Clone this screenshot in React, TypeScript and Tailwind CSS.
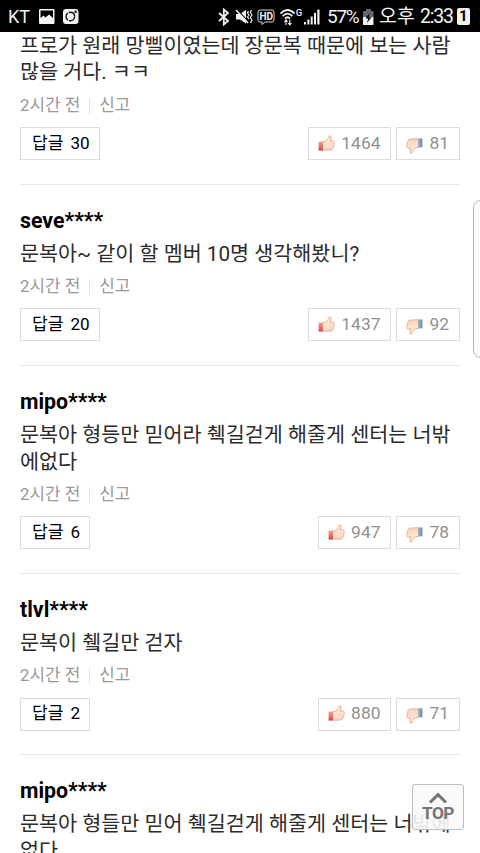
import type { ReactNode } from "react";

type Comment = {
  user?: string;
  lines: string[];
  replies?: number;
  likes?: number;
  dislikes?: number;
};

const comments: Comment[] = [
  { lines: ["프로가 원래 망삘이였는데 장문복 때문에 보는 사람", "많을 거다. ㅋㅋ"], replies: 30, likes: 1464, dislikes: 81 },
  { user: "seve****", lines: ["문복아~ 같이 할 멤버 10명 생각해봤니?"], replies: 20, likes: 1437, dislikes: 92 },
  { user: "mipo****", lines: ["문복아 형등만 믿어라 췍길걷게 해줄게 센터는 너밖", "에없다"], replies: 6, likes: 947, dislikes: 78 },
  { user: "tlvl****", lines: ["문복이 췤길만 걷자"], replies: 2, likes: 880, dislikes: 71 },
  { user: "mipo****", lines: ["문복아 형들만 믿어 췍길걷게 해줄게 센터는 너밖에", "없다"] },
];

const HAND =
  "M4.5 6.8 L7.5 6.2 C9.8 4.8 10.8 2.8 11.2 1 C12.6 0.2 13.4 1.6 13 3.2 L12.2 6 L14.8 5.9 C16.2 6 16.5 7.2 15.9 8.1 C16.6 8.9 16.3 10 15.6 10.5 C16 11.5 15.6 12.5 14.8 12.8 C14.9 14.1 14.1 14.8 13 14.9 L7.5 15.2 L4.5 15 Z";

function Thumb({ down = false }: { down?: boolean }) {
  const id = down ? "cuff-down" : "cuff-up";
  return (
    <svg width="17" height="17" viewBox="0 0 17 17" className={down ? "rotate-180" : ""}>
      <defs>
        <linearGradient id={id} x1="0" y1="0" x2={down ? "1" : "0"} y2={down ? "0" : "1"}>
          <stop offset="0" stopColor={down ? "#7186a8" : "#eda694"} />
          <stop offset="1" stopColor={down ? "#aab4c4" : "#d64545"} />
        </linearGradient>
        <linearGradient id={`${id}-skin`} x1="0" y1="0" x2="0" y2="1">
          <stop offset="0" stopColor="#fdeee2" />
          <stop offset="1" stopColor="#f8d5c0" />
        </linearGradient>
      </defs>
      <path d={HAND} fill={`url(#${id}-skin)`} stroke="#e8a883" strokeWidth="0.9" strokeLinejoin="round" />
      <rect x="0.6" y="6.6" width="4.4" height="9" fill={`url(#${id})`} />
    </svg>
  );
}

function VoteBox({ count, down = false }: { count: number; down?: boolean }) {
  return (
    <div className="flex h-[33px] items-center border border-[#dcdcdc] pr-[10px] pl-[9px]">
      <div className={down ? "mt-[3px]" : "-mt-px"}>
        <Thumb down={down} />
      </div>
      <span className="ml-[6px] text-[17.4px] leading-none text-[#909090]">{count}</span>
    </div>
  );
}

function CommentItem({ comment }: { comment: Comment }) {
  return (
    <li className="border-b border-[#e8e8e8]">
      {comment.user && (
        <p className="mb-[6px] pt-[22px] text-[21.3px] leading-[27px] font-bold text-black">{comment.user}</p>
      )}
      {comment.lines.map((line) => (
        <p key={line} className="relative top-[0.7px] text-[20.7px] leading-[26.67px] whitespace-nowrap text-[#2b2b2b]">
          {line}
        </p>
      ))}
      {comment.replies !== undefined && (
        <>
          <div className="mt-[9px] flex h-5 items-center text-[16.9px] leading-5 text-[#999]">
            <span className="mt-px">2시간 전</span>
            <span className="mx-[9px] mt-[3px] h-4 w-px bg-[#e2e2e2]" />
            <span className="mt-px">신고</span>
          </div>
          <div className="mt-[12.9px] mb-[23.7px] flex justify-between">
            <div className="flex h-[33px] items-center gap-[7px] border border-[#dcdcdc] pr-[9px] pl-[11px] text-[17.1px] leading-none text-black">
              <span className="-mt-px">답글</span>
              <span className="-mt-px">{comment.replies}</span>
            </div>
            <div className="flex gap-[5px]">
              <VoteBox count={comment.likes ?? 0} />
              <VoteBox count={comment.dislikes ?? 0} down />
            </div>
          </div>
        </>
      )}
    </li>
  );
}

function Icon({ w, className = "", children }: { w: number; className?: string; children: ReactNode }) {
  return (
    <svg width={w} height="18" viewBox={`0 0 ${w} 18`} fill="none" className={`shrink-0 ${className}`}>
      {children}
    </svg>
  );
}

function StatusBar() {
  return (
    <header className="relative z-10 flex h-8 items-center bg-black pt-[1px] pl-[8px] text-[#f2f2f2]">
      <span className="w-[31px] text-[18px] leading-none">KT</span>
      <Icon w={16}>
        <path fillRule="evenodd" fill="#f2f2f2" d="M1 1H14.5Q15.5 1 15.5 2V15Q15.5 16 14.5 16H1Q0 16 0 15V2Q0 1 1 1ZM1.5 2.5V10L4.5 7.5L6.5 9.5L10 6.5L14 10V2.5Z" />
      </Icon>
      <Icon w={16} className="ml-2">
        <rect y="1" width="15.5" height="15" rx="3" fill="#f2f2f2" />
        <circle cx="7.3" cy="8.5" r="4.3" stroke="#111" strokeWidth="1.4" strokeDasharray="8 1" />
        <circle cx="12.6" cy="3.8" r="1.4" fill="#333" />
      </Icon>
      <Icon w={12} className="ml-[139px]">
        <path d="M1 5L10 13L5.8 16.5V1.5L10 5L1 13" stroke="#f2f2f2" strokeWidth="1.8" />
      </Icon>
      <Icon w={18} className="ml-[5px]">
        <path d="M1 6H5L11 1.8V15.5L5 11.5H1Z" fill="#f2f2f2" />
        <path d="M2 1.5L13 13.5" stroke="#000" strokeWidth="1.2" />
        <path d="M1 2L13 15" stroke="#f2f2f2" strokeWidth="1.5" />
        <path d="M13.5 3L12.5 5L14 7L12.5 9L14 11M16.5 2L15.3 4.5L17 7L15.3 9.5L17 12L15.5 15" stroke="#f2f2f2" strokeWidth="1.2" />
      </Icon>
      <Icon w={19} className="ml-[4px]">
        <path d="M3 2H15Q17 2 17 4V12Q17 14 15 14H8L5 16.5V14H3Q1 14 1 12V4Q1 2 3 2Z" stroke="#d5d5d5" strokeWidth="1" />
        <text x="2.4" y="11.7" fontSize="10" fontWeight="700" fill="#f2f2f2" fontFamily="Roboto">HD</text>
      </Icon>
      <Icon w={23} className="ml-[4px]">
        <path d="M0.5 5.5Q7.5 -1.5 14.5 5.5M2.7 8.2Q7.5 3 12.3 8.2M5 10.5Q7.5 8 10 10.5" stroke="#f2f2f2" strokeWidth="1.8" />
        <path d="M6 17V12M4.3 14L6 12L7.5 14M9.8 11.5V16.5M8.2 15L9.8 17L11.5 15" stroke="#f2f2f2" strokeWidth="1.1" />
        <text x="15.7" y="8" fontSize="9.5" fontWeight="500" fill="#f2f2f2" fontFamily="Roboto">G</text>
      </Icon>
      <Icon w={16} className="ml-[1px]">
        <path d="M0 14H2V16.5H0ZM3.4 11.5H5.4V16.5H3.4ZM6.7 8.5H8.7V16.5H6.7ZM10 5H12V16.5H10ZM13.3 1.5H15.5V16.5H13.3Z" fill="#f2f2f2" />
      </Icon>
      <span className="ml-[7px] w-[36px] text-[19px] leading-none tracking-[-1.3px]">57%</span>
      <Icon w={12}>
        <path d="M3 1H8V3H10.5V9H0V3H3Z" fill="#666" />
        <path d="M0 9H10.5V17H0Z" fill="#f2f2f2" />
        <path d="M6.5 5L2.5 10.5H5.2L4 15L8.5 9.3H5.7Z" fill="#000" />
      </Icon>
      <span className="ml-[4px] text-[19.5px] leading-none">오후</span>
      <span className="ml-[5px] w-[37px] text-[19.5px] leading-none tracking-[-1.2px]">2:33</span>
      <span className="-mt-[1px] flex h-[17px] w-[13px] items-center justify-center rounded-[2px] bg-[#f2f2f2] text-[15px] leading-none font-bold text-black">
        1
      </span>
    </header>
  );
}

export default function App() {
  return (
    <div className="relative h-[853px] w-[480px] overflow-hidden bg-white font-[Roboto,'Noto_Sans_CJK_KR',sans-serif]">
      <StatusBar />
      <ul className="px-5">
        {comments.map((comment, index) => (
          <CommentItem key={index} comment={comment} />
        ))}
      </ul>

      {/* edge handle */}
      <div className="absolute top-[200px] -right-[8px] h-[158px] w-[15px] rounded-[8px] border border-[#b5b5b5] bg-[#fafafa]" />

      <button className="absolute top-[784px] left-[412px] flex h-[46px] w-[52px] flex-col items-center rounded-[3px] border border-[#bdbdbd] bg-[#f9f9f9]/90 text-[#747474]">
        <svg width="20" height="13" viewBox="0 0 20 13" fill="none" className="mt-[7px]">
          <path d="M2 10.5L10 2.7L18 10.5" stroke="currentColor" strokeWidth="3" />
        </svg>
        <span className="text-[17.3px] leading-[17px] font-bold tracking-[-0.5px]">TOP</span>
      </button>
    </div>
  );
}
